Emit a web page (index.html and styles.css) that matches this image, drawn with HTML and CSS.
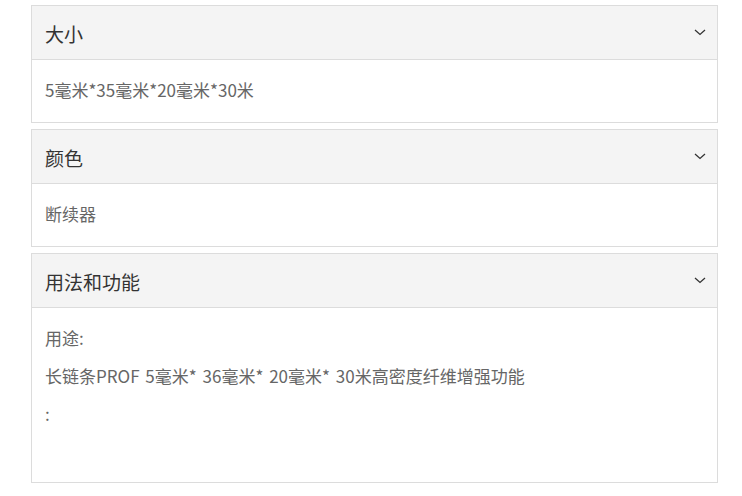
FILE: index.html
```html
<!DOCTYPE html>
<html lang="zh-CN">
<head>
<meta charset="utf-8">
<link rel="stylesheet" href="styles.css">
</head>
<body>
<div class="accordion">
  <section class="panel">
    <div class="panel-head">
      <span class="panel-title">大小</span>
      <svg class="chev" width="12" height="7" viewBox="0 0 12 7"><path d="M1 1 L6 5.5 L11 1" fill="none" stroke="#333" stroke-width="1.3"/></svg>
    </div>
    <div class="panel-body">
      <p>5毫米*35毫米*20毫米*30米</p>
    </div>
  </section>
  <section class="panel">
    <div class="panel-head">
      <span class="panel-title">颜色</span>
      <svg class="chev" width="12" height="7" viewBox="0 0 12 7"><path d="M1 1 L6 5.5 L11 1" fill="none" stroke="#333" stroke-width="1.3"/></svg>
    </div>
    <div class="panel-body">
      <p>断续器</p>
    </div>
  </section>
  <section class="panel">
    <div class="panel-head">
      <span class="panel-title">用法和功能</span>
      <svg class="chev" width="12" height="7" viewBox="0 0 12 7"><path d="M1 1 L6 5.5 L11 1" fill="none" stroke="#333" stroke-width="1.3"/></svg>
    </div>
    <div class="panel-body panel-body-tall">
      <p>用途:</p>
      <p class="wide">长链条PROF 5毫米* 36毫米* 20毫米* 30米高密度纤维增强功能</p>
      <p>:</p>
    </div>
  </section>
</div>
</body>
</html>
```

FILE: styles.css
```css
html, body {
  margin: 0;
  padding: 0;
  background: #fff;
}
body {
  font-family: "Noto Sans CJK SC", "Noto Sans", sans-serif;
}
.accordion {
  width: 687px;
  padding: 5px 0 0 31px;
  display: flex;
  flex-direction: column;
  gap: 6.5px;
}
.panel {
  border: 1px solid #dcdcdc;
  background: #fff;
}
.panel-head {
  height: 52.5px;
  background: #f4f4f4;
  border-bottom: 1px solid #dcdcdc;
  display: flex;
  align-items: center;
  justify-content: space-between;
  padding: 0 11px 0 13px;
}
.panel-title {
  font-size: 19px;
  color: #333;
  line-height: 1;
  padding-top: 2px;
}
.chev {
  display: block;
}
.panel-body {
  padding: 11px 13px 13px;
}
.panel-body p {
  margin: 0;
  font-size: 17px;
  line-height: 38px;
  color: #666;
}
.panel-body p.wide {
  word-spacing: 2px;
}
.panel-body-tall {
  padding-bottom: 49.5px;
}
```
